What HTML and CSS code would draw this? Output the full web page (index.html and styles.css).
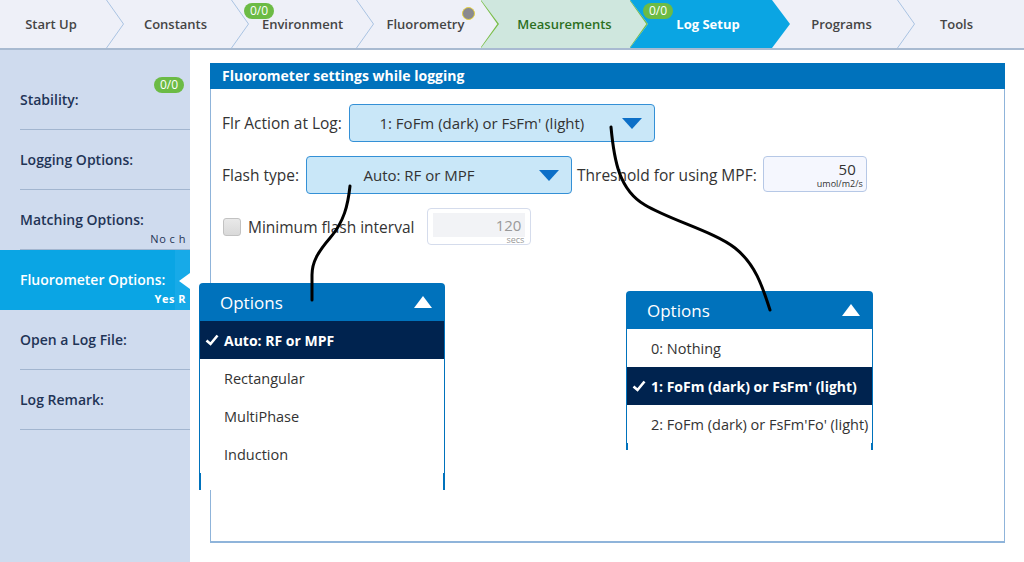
FILE: index.html
```html
<!DOCTYPE html>
<html lang="en">
<head>
  <meta charset="UTF-8">
  <meta name="viewport" content="width=device-width, initial-scale=1.0">
  <title>Log Setup - Fluorometer Options</title>
  <link rel="stylesheet" href="styles.css">
</head>
<body>
    <!-- top step bar -->
    <nav class="tabs">
        <div class="tab">Start Up<svg class="chev"><polyline points="0.5,0 17.5,24 0.5,48" /></svg></div>
        <div class="tab">Constants<svg class="chev"><polyline points="0.5,0 17.5,24 0.5,48" /></svg></div>
        <div class="tab">
            <span class="badge tab-badge">0/0</span>
            Environment<svg class="chev"><polyline points="0.5,0 17.5,24 0.5,48" /></svg>
        </div>
        <div class="tab">
            <span class="dot"></span>
            Fluorometry<svg class="chev green"><polyline points="0.5,0 17.5,24 0.5,48" /></svg>
        </div>
        <div class="tab tab-done">Measurements<svg class="chev green"><polyline points="0.5,0 17.5,24 0.5,48" /></svg></div>
        <div class="tab tab-current">
            <span class="badge tab-badge">0/0</span>
            Log Setup
        </div>
        <div class="tab">Programs<svg class="chev"><polyline points="0.5,0 17.5,24 0.5,48" /></svg></div>
        <div class="tab">Tools</div>
    </nav>

    <div class="layout">
        <aside class="side">
            <div class="side-item">
                <span class="badge side-badge">0/0</span>
                <div class="side-in"><div class="side-label">Stability:</div></div>
            </div>
            <div class="side-item">
                <div class="side-in"><div class="side-label">Logging Options:</div></div>
            </div>
            <div class="side-item">
                <div class="side-in">
                    <div class="side-label">Matching Options:</div>
                    <div class="side-sub">No c h</div>
                </div>
            </div>
            <div class="side-item active">
                <div class="side-in">
                    <div class="side-label">Fluorometer Options:</div>
                    <div class="side-sub">Yes R</div>
                </div>
            </div>
            <div class="side-item">
                <div class="side-in"><div class="side-label">Open a Log File:</div></div>
            </div>
            <div class="side-item">
                <div class="side-in"><div class="side-label">Log Remark:</div></div>
            </div>
        </aside>

        <main class="content">
            <section class="panel">
                <h2 class="panel-title">Fluorometer settings while logging</h2>
                <div class="panel-body">
                    <div class="row">
                        <span class="lbl">Flr Action at Log:</span>
                        <div class="select sel-action">
                            <span class="val">1: FoFm (dark) or FsFm' (light)</span>
                            <svg class="caret" viewBox="0 0 20 11"><polygon points="0,0 20,0 10,11" /></svg>
                        </div>
                    </div>
                    <div class="row">
                        <span class="lbl">Flash type:</span>
                        <div class="select sel-flash">
                            <span class="val">Auto: RF or MPF</span>
                            <svg class="caret" viewBox="0 0 20 11"><polygon points="0,0 20,0 10,11" /></svg>
                        </div>
                        <span class="lbl lbl-mpf">Threshold for using MPF:</span>
                        <div class="num">
                            <span class="num-v">50</span>
                            <span class="num-u">umol/m2/s</span>
                        </div>
                    </div>
                    <div class="row">
                        <span class="chk"></span>
                        <span class="lbl lbl-chk">Minimum flash interval</span>
                        <div class="num num-off">
                            <span class="num-box">120</span>
                            <span class="num-u">secs</span>
                        </div>
                    </div>
                </div>
            </section>
        </main>
    </div>

    <!-- open dropdowns -->
    <div class="menu menu-flash">
        <div class="menu-head">Options<svg class="up" viewBox="0 0 18 12"><polygon points="0,12 18,12 9,0" /></svg></div>
        <div class="menu-list">
            <div class="opt sel"><svg class="tick" viewBox="0 0 14 12"><polyline points="1.5,6.5 5.5,10 12.5,1.5" /></svg>Auto: RF or MPF</div>
            <div class="opt">Rectangular</div>
            <div class="opt">MultiPhase</div>
            <div class="opt">Induction</div>
        </div>
        <div class="menu-foot"></div>
    </div>

    <div class="menu menu-action">
        <div class="menu-head">Options<svg class="up" viewBox="0 0 18 12"><polygon points="0,12 18,12 9,0" /></svg></div>
        <div class="menu-list">
            <div class="opt">0: Nothing</div>
            <div class="opt sel"><svg class="tick" viewBox="0 0 14 12"><polyline points="1.5,6.5 5.5,10 12.5,1.5" /></svg>1: FoFm (dark) or FsFm' (light)</div>
            <div class="opt">2: FoFm (dark) or FsFm'Fo' (light)</div>
        </div>
        <div class="menu-foot short"></div>
    </div>

    <!-- hand drawn pointers -->
    <svg class="ink" viewBox="0 0 1024 562">
        <path d="M611,127 C614,160 619,190 645,205 C670,220 715,232 735,248 C755,264 762,285 770,310" />
        <path d="M350,186 C348,205 344,222 330,238 C318,252 312,262 312,275 L312,300" />
    </svg>
</body>
</html>
```

FILE: styles.css
```css
* {
    box-sizing: border-box;
}
body {
    margin: 0;
    width: 1024px;
    height: 562px;
    overflow: hidden;
    position: relative;
    background: #fff;
    font-family: "Open Sans", "Liberation Sans", sans-serif;
    color: #333;
}

/* ---- step tabs ---- */
.tabs {
    display: flex;
    height: 50px;
    background: #eef0f8;
    border-bottom: 2px solid #a8bad1;
}
.tab {
    position: relative;
    flex: none;
    display: flex;
    align-items: center;
    justify-content: center;
    height: 48px;
    padding: 0 18px;
    margin-left: -18px;
    font-size: 13px;
    font-weight: 600;
    color: #454545;
    white-space: nowrap;
}
.tab:nth-child(1) { margin-left: 0; padding-left: 0; padding-right: 22px; width: 124px; }
.tab:nth-child(2) { width: 143px; padding-right: 22px; }
.tab:nth-child(3) { width: 143px; }
.tab:nth-child(4) { width: 143px; padding-right: 22px; }
.tab:nth-child(5) { width: 167px; }
.tab:nth-child(6) { width: 160px; padding-right: 22px; }
.tab:nth-child(7) { width: 143px; padding-right: 22px; }
.tab:nth-child(8) { flex: 1; padding-right: 26px; }
.tab-done {
    background: #cfe7de;
    color: #2d6f1e;
    clip-path: polygon(0 0, calc(100% - 18px) 0, 100% 50%, calc(100% - 18px) 100%, 0 100%, 18px 50%);
}
.tab-current {
    background: #0aa5e3;
    color: #fff;
    font-weight: 700;
    clip-path: polygon(0 0, calc(100% - 18px) 0, 100% 50%, calc(100% - 18px) 100%, 0 100%, 18px 50%);
}
.chev {
    position: absolute;
    right: 0;
    top: 0;
    width: 18px;
    height: 48px;
    fill: none;
    stroke: #a9c3e2;
    stroke-width: 1;
}
.chev.green {
    stroke: #78bd45;
    stroke-width: 2;
}
.badge {
    display: inline-block;
    padding: 0 6px;
    border-radius: 8px;
    background: #6cbb45;
    color: #fff;
    font-size: 12px;
    font-weight: 400;
    line-height: 16px;
}
.tab-badge {
    position: absolute;
    top: 3px;
    left: 13px;
}
.dot {
    position: absolute;
    top: 7px;
    right: 24px;
    width: 13px;
    height: 13px;
    border-radius: 50%;
    background: #8a8a8e;
    border: 1px solid #e3cf3c;
}

/* ---- layout ---- */
.layout {
    display: flex;
    height: 512px;
}
.side {
    flex: none;
    width: 190px;
    padding-top: 20px;
    background: #cfdbee;
    overflow: hidden;
}
.side-item {
    position: relative;
    height: 60px;
    padding-left: 20px;
}
.side-in {
    height: 60px;
    padding-top: 21px;
    border-bottom: 1px solid #a2b5cf;
}
.side-label {
    font-size: 14px;
    font-weight: 600;
    line-height: 18px;
    color: #1f3456;
}
.side-sub {
    margin-top: 4px;
    padding-right: 4px;
    text-align: right;
    font-size: 11px;
    line-height: 12px;
    letter-spacing: 0.5px;
    color: #1f3456;
}
.side-badge {
    position: absolute;
    top: 7px;
    right: 6px;
}
.side-item.active {
    background: linear-gradient(to right, #0aa5e4 175px, #17aae8 175px);
}
.side-item.active .side-in {
    border-bottom: none;
}
.side-item.active .side-label {
    color: #fff;
}
.side-item.active .side-sub {
    color: #fff;
    font-weight: 700;
}
.side-item.active::after {
    content: "";
    position: absolute;
    right: 0;
    top: 23px;
    border-right: 11px solid #fff;
    border-top: 8px solid transparent;
    border-bottom: 8px solid transparent;
}

/* ---- settings panel ---- */
.content {
    flex: 1;
    padding: 13px 19px 19px 20px;
}
.panel {
    height: 100%;
    border: 1px solid #8fb4da;
    border-bottom-width: 2px;
}
.panel-title {
    margin: -1px -1px 0;
    height: 26px;
    padding-left: 12px;
    background: #0072bc;
    color: #fff;
    font-size: 14px;
    font-weight: 700;
    line-height: 26px;
}
.panel-body {
    padding: 15px 11px 0;
}
.row {
    display: flex;
    align-items: center;
    margin-bottom: 14px;
}
.lbl {
    font-size: 15.5px;
    color: #333;
    white-space: nowrap;
}
.select {
    display: flex;
    align-items: center;
    height: 38px;
    margin-left: 7px;
    background: #c9e7f8;
    border: 1px solid #3490d6;
    border-radius: 4px;
    font-size: 15px;
    color: #333;
}
.sel-action { width: 306px; }
.sel-flash { width: 266px; }
.val {
    flex: 1;
    padding-right: 8px;
    text-align: center;
    white-space: nowrap;
}
.caret {
    width: 20px;
    height: 11px;
    margin-right: 12px;
    fill: #0c6fc7;
}
.lbl-mpf {
    margin-left: 5px;
}
.num {
    align-self: flex-start;
    display: flex;
    flex-direction: column;
    align-items: flex-end;
    justify-content: flex-end;
    width: 104px;
    height: 36px;
    margin-left: 6px;
    padding: 0 3px 2px;
    background: #f5f7fe;
    border: 1px solid #b6c8e6;
    border-radius: 4px;
}
.num-v {
    padding-right: 7px;
    font-size: 15px;
    line-height: 15px;
    margin-bottom: 2px;
}
.num-u {
    font-size: 9px;
    line-height: 10px;
    color: #333;
}
.chk {
    width: 18px;
    height: 18px;
    margin-left: 1px;
    border: 1px solid #c2c2c2;
    border-radius: 3px;
    background: linear-gradient(#e9e9e9, #d9d9d9);
}
.lbl-chk {
    margin-left: 7px;
}
.num-off {
    height: 37px;
    margin-left: 13px;
    padding: 4px 5px 0;
    justify-content: flex-start;
    align-items: stretch;
    background: #fff;
    border-color: #d5dcec;
}
.num-box {
    height: 25px;
    padding-right: 4px;
    background: #f2f3f6;
    text-align: right;
    font-size: 15px;
    line-height: 24px;
    color: #999;
}
.num-off .num-u {
    margin-top: -2px;
    padding-right: 1px;
    text-align: right;
    color: #999;
}

/* ---- dropdown menus ---- */
.menu {
    position: absolute;
    background: #fff;
    border-radius: 4px 4px 0 0;
    overflow: hidden;
}
.menu-flash {
    left: 199px;
    top: 283px;
    width: 246px;
}
.menu-action {
    left: 626px;
    top: 291px;
    width: 247px;
}
.menu-head {
    display: flex;
    align-items: center;
    justify-content: space-between;
    height: 38px;
    padding: 0 13px 0 21px;
    background: #0072bc;
    color: #fff;
    font-size: 17px;
}
.up {
    width: 18px;
    height: 12px;
    fill: #fff;
}
.menu-list {
    border-left: 1px solid #0072bc;
    border-right: 1px solid #0072bc;
}
.opt {
    display: flex;
    align-items: center;
    height: 38px;
    padding-left: 24px;
    font-size: 14.5px;
    color: #333;
    white-space: nowrap;
    overflow: hidden;
}
.opt.sel {
    padding-left: 5px;
    background: #00234f;
    color: #fff;
    font-size: 14px;
    font-weight: 700;
}
.tick {
    width: 14px;
    height: 12px;
    margin-right: 5px;
    fill: none;
    stroke: #fff;
    stroke-width: 2.6;
}
.menu-foot {
    height: 17px;
    border-left: 2px solid #0072bc;
    border-right: 2px solid #0072bc;
}
.menu-foot.short {
    height: 7px;
}

.ink {
    position: absolute;
    left: 0;
    top: 0;
    width: 1024px;
    height: 562px;
    pointer-events: none;
    fill: none;
    stroke: #000;
    stroke-width: 3;
    stroke-linecap: round;
}
```
